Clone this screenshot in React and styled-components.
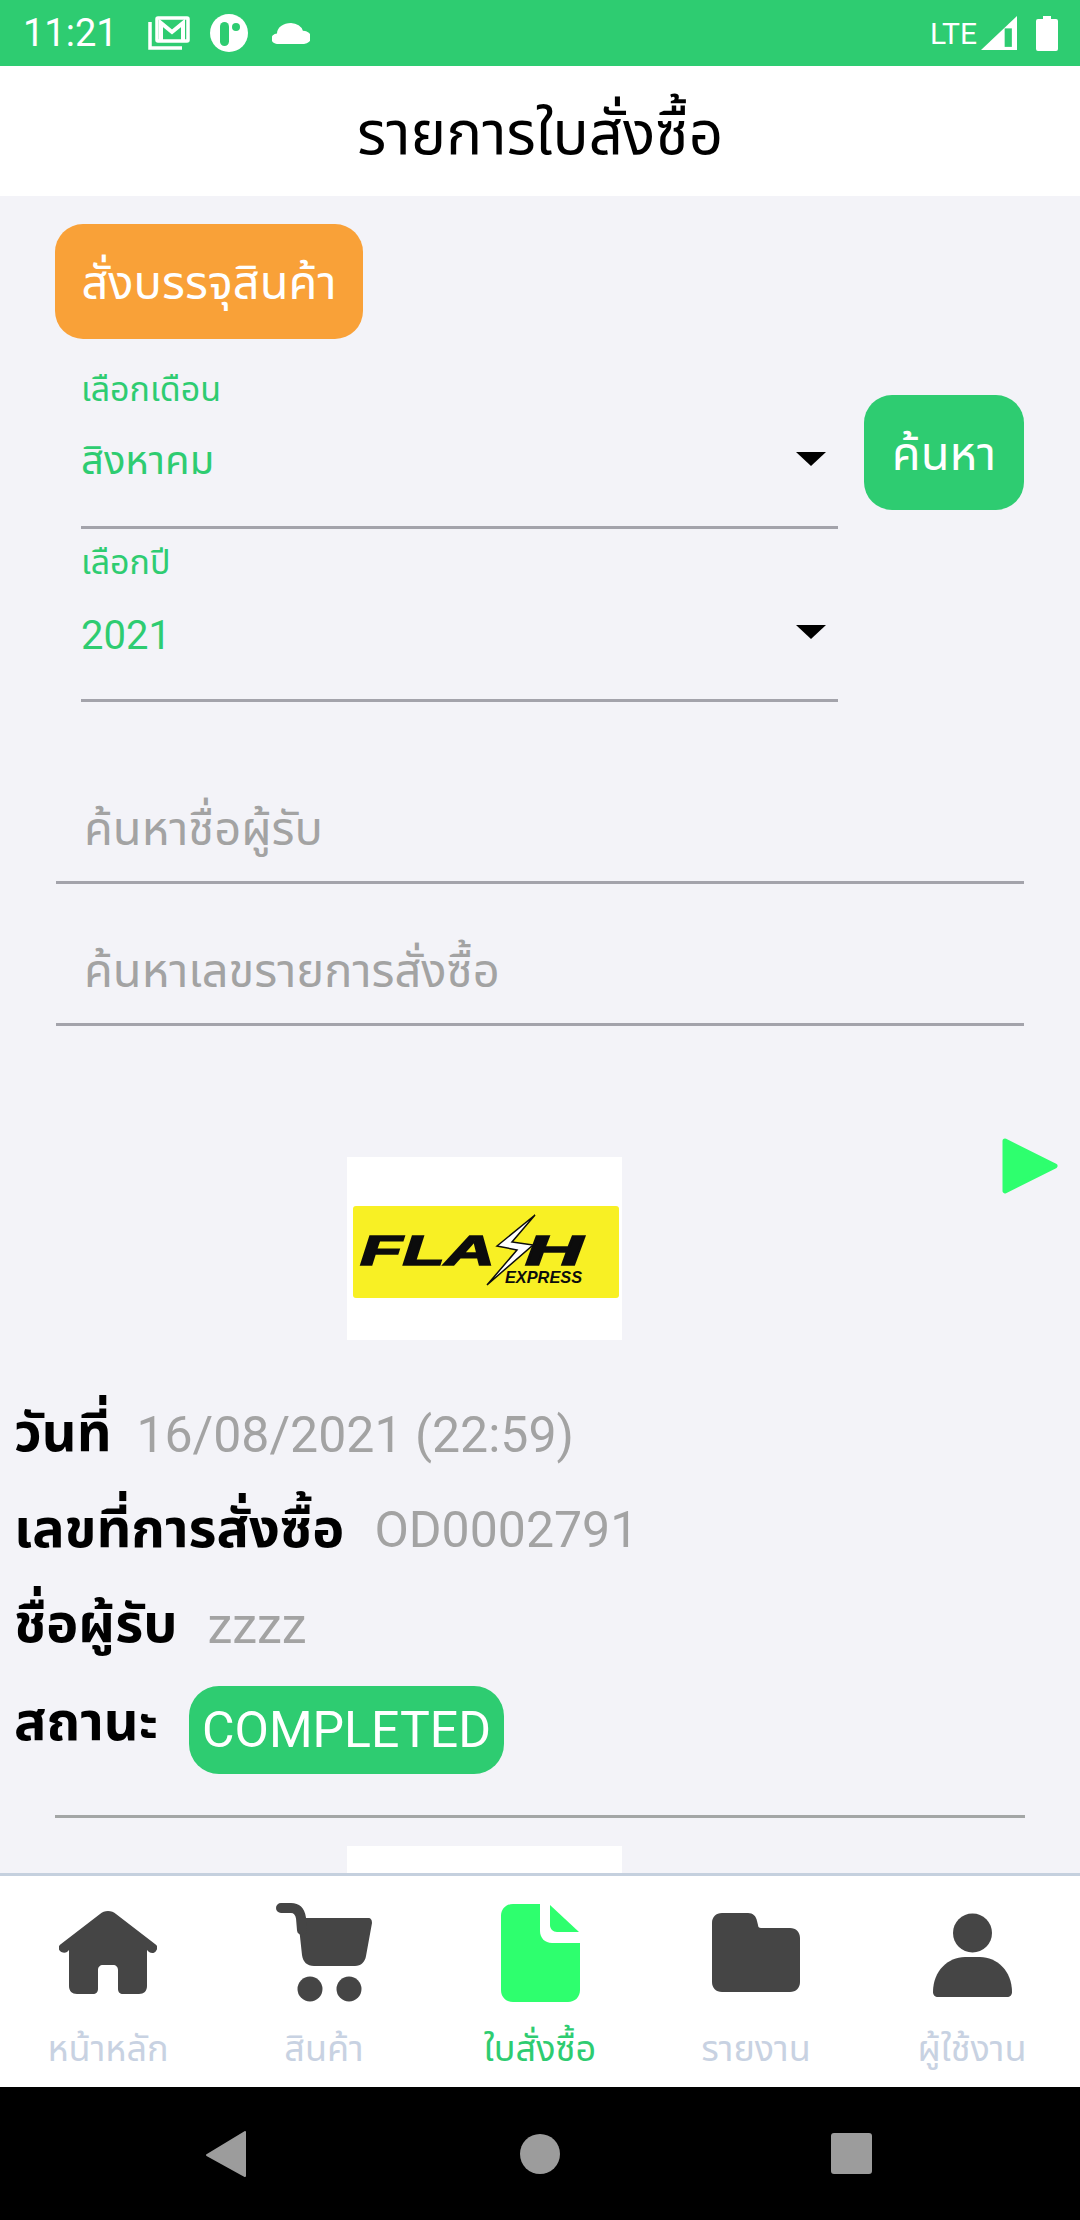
import styled, { createGlobalStyle } from 'styled-components';

const GREEN = '#2ecc71';
const BG = '#f3f3f8';
const FONT = `Roboto, "Noto Sans", "Noto Sans Thai", sans-serif`;

const Global = createGlobalStyle`
  html, body { margin: 0; padding: 0; background: ${BG}; }
  * { box-sizing: border-box; }
  body { font-family: ${FONT}; }
`;

const Page = styled.div`
  width: 1080px;
  height: 2220px;
  display: flex;
  flex-direction: column;
  overflow: hidden;
`;

const StatusBar = styled.div`
  height: 66px;
  flex: none;
  background: ${GREEN};
  color: #fff;
  display: flex;
  align-items: center;
  padding: 0 22px 0 23px;
`;
const Clock = styled.span`
  font-size: 38px;
  width: 125px;
`;
const StatusIcons = styled.div`
  display: flex;
  align-items: center;
  gap: 20px;
`;
const StatusRight = styled.div`
  margin-left: auto;
  display: flex;
  align-items: center;
`;
const Lte = styled.span`
  font-size: 30px;
  margin-right: 4px;
`;

const Header = styled.header`
  height: 130px;
  flex: none;
  background: #fff;
  display: flex;
  align-items: center;
  justify-content: center;
  padding-top: 8px;
  font-size: 60px;
  color: #000;
`;

const Main = styled.main`
  flex: 1;
  min-height: 0;
  overflow: hidden;
  background: ${BG};
  padding-top: 28px;
`;

const OrderButton = styled.div`
  margin-left: 55px;
  width: 308px;
  height: 115px;
  padding-top: 5px;
  border-radius: 28px;
  background: #f9a138;
  color: #fff;
  font-size: 47px;
  display: flex;
  align-items: center;
  justify-content: center;
`;

const FilterRow = styled.div`
  display: flex;
  margin: 17px 0 0 81px;
  gap: 26px;
`;
const FilterFields = styled.div`
  width: 757px;
`;
const Field = styled.div`
  height: 173px;
  padding-top: 8px;
  border-bottom: 3px solid #a3a3ab;
`;
const FieldLabel = styled.div`
  font-size: 34px;
  color: ${GREEN};
  height: 50px;
  line-height: 50px;
`;
const FieldValue = styled.div`
  display: flex;
  align-items: center;
  justify-content: space-between;
  height: 72px;
  margin-top: 12px;
  font-size: 40px;
  color: ${GREEN};
  padding-right: 12px;
`;
const Caret = styled.span`
  width: 0;
  height: 0;
  margin-bottom: 6px;
  border-left: 15px solid transparent;
  border-right: 15px solid transparent;
  border-top: 14px solid #000;
`;
const SearchButton = styled.div`
  width: 160px;
  height: 115px;
  margin-top: 39px;
  padding-top: 5px;
  border-radius: 28px;
  background: ${GREEN};
  color: #fff;
  font-size: 47px;
  display: flex;
  align-items: center;
  justify-content: center;
`;

const SearchInputs = styled.div`
  margin: 40px 56px 0;
  display: flex;
  flex-direction: column;
`;
const SearchInput = styled.div`
  height: 142px;
  display: flex;
  align-items: flex-end;
  padding: 0 0 15px 28px;
  border-bottom: 3px solid #a3a3ab;
  font-size: 47px;
  color: #a3a3a3;
`;

const Order = styled.section`
  padding-top: 131px;
`;
const OrderTop = styled.div`
  display: flex;
  align-items: flex-start;
  padding: 0 22px 0 347px;
  justify-content: space-between;
`;
const Logo = styled.svg`
  display: block;
  flex: none;
`;
const PlayMark = styled.svg`
  display: block;
  margin-top: -19px;
`;
const Details = styled.div`
  margin-top: 47px;
  padding-left: 14px;
`;
const DetailRow = styled.div`
  display: flex;
  align-items: center;
  height: 95.5px;
  gap: ${p => p.$gap || 30}px;
`;
const DetailLabel = styled.span`
  font-size: 54px;
  font-weight: 700;
  color: #000;
`;
const DetailValue = styled.span`
  font-size: 50px;
  color: #a3a3a3;
`;
const StatusRow = styled(DetailRow)`
  height: 88px;
  margin-top: 12px;
  ${DetailLabel} { margin-bottom: 12px; }
`;
const StatusPill = styled.span`
  height: 88px;
  padding: 0 13px;
  margin-left: 1px;
  border-radius: 30px;
  background: ${GREEN};
  color: #fff;
  font-size: 50px;
  display: flex;
  align-items: center;
`;
const Divider = styled.hr`
  margin: 41px 55px 0;
  border: 0;
  height: 3px;
  background: #a3a6a6;
`;
const NextLogo = styled.div`
  margin: 28px 0 0 347px;
  width: 275px;
  height: 100px;
  background: #fff;
`;

const TabBar = styled.nav`
  height: 214px;
  flex: none;
  background: #fff;
  border-top: 3px solid #c5d0de;
  display: grid;
  grid-template-columns: repeat(5, 1fr);
`;
const Tab = styled.div`
  display: flex;
  flex-direction: column;
  align-items: center;
  padding-top: 27px;
  color: ${p => (p.$active ? GREEN : '#c8d2e2')};
  font-size: 36px;
`;
const TabIcon = styled.svg`
  display: block;
  fill: ${p => (p.$active ? '#2eff6e' : '#454545')};
`;
const IconSlot = styled.div`
  height: 99px;
  display: flex;
  align-items: center;
`;
const TabLabel = styled.span`
  margin-top: 17px;
  line-height: 60px;
`;

const NavBar = styled.div`
  height: 133px;
  flex: none;
  background: #000;
  display: grid;
  grid-template-columns: repeat(3, 80px);
  justify-content: center;
  gap: 234px;
  align-items: center;
  color: #9c9c9c;
`;
const NavCell = styled.div`
  display: flex;
  justify-content: center;
`;
const NavSquare = styled.svg`
  margin-right: 6px;
`;

const MailIcon = () => (
  <svg width="42" height="34" viewBox="0 0 42 34" fill="none" stroke="#fff" strokeWidth="3.5">
    <path d="M2 6v26h32" />
    <rect x="9" y="2" width="31" height="23" rx="1" />
    <path d="M13 24V7l11 9 11-9v17" strokeWidth="4" />
  </svg>
);
const RoundAppIcon = () => (
  <svg width="38" height="38" viewBox="0 0 38 38">
    <circle cx="19" cy="19" r="19" fill="#fff" />
    <rect x="10" y="8" width="9" height="24" rx="4.5" fill={GREEN} />
    <circle cx="26" cy="13" r="4" fill={GREEN} />
  </svg>
);
const CloudIcon = () => (
  <svg width="38" height="21" viewBox="0 0 38 24" fill="#fff" style={{ marginLeft: 4 }} preserveAspectRatio="none">
    <path d="M6 24a6 6 0 0 1-1-12A14 12 0 0 1 19 0a13 12 0 0 1 12 9 7.500 7.500 0 0 1 1 15z" />
  </svg>
);
const SignalIcon = () => (
  <svg width="36" height="34" viewBox="0 0 35 33">
    <path d="M35 0v33H0z" fill="#fff" />
    <path d="M23 12h7v18h-7z" fill={GREEN} />
  </svg>
);
const BatteryIcon = () => (
  <svg width="22" height="35" viewBox="0 0 22 35" fill="#fff" style={{ marginLeft: 19 }}>
    <path d="M7 0h8v3h5a2 2 0 0 1 2 2v28a2 2 0 0 1-2 2H2a2 2 0 0 1-2-2V5a2 2 0 0 1 2-2h5z" />
  </svg>
);

const HomeGlyph = ({ $active }) => (
  <TabIcon $active={$active} width="98" height="83" viewBox="0 0 98 83">
    <path d="M49 0c-3 0-6 1-8 3L2 33c-3 2-3 5-1 7s5 2 7 1l2-2v36c0 5 3 8 8 8h16c3 0 5-2 5-5V59c0-3 2-5 5-5h10c3 0 5 2 5 5v19c0 3 2 5 5 5h16c5 0 8-3 8-8V39l2 2c2 1 5 2 7-1s2-5-1-7L57 3c-2-2-5-3-8-3z" />
  </TabIcon>
);
const CartGlyph = ({ $active }) => (
  <TabIcon $active={$active} width="96" height="99" viewBox="0 0 96 99">
    <path d="M22 15h70c3 0 4 2 4 5l-6 33c-1 6-5 10-11 10H38c-7 0-11-4-12-11z" />
    <path d="M5 5h10c6 0 9 4 10 10l1 12" fill="none" stroke="#454545" strokeWidth="10" strokeLinecap="round" />
    <circle cx="34" cy="86" r="12.500" />
    <circle cx="73" cy="86" r="12.500" />
  </TabIcon>
);
const DocGlyph = ({ $active }) => (
  <TabIcon $active={$active} width="79" height="98" viewBox="0 0 79 98">
    <path d="M12 0h27v27c0 7 5 12 12 12h28v47c0 7-5 12-12 12H12C5 98 0 93 0 86V12C0 5 5 0 12 0z" />
    <path d="M49 1l29 27H56c-4 0-7-3-7-7z" />
  </TabIcon>
);
const FolderGlyph = ({ $active }) => (
  <TabIcon $active={$active} width="88" height="79" viewBox="0 0 88 79">
    <path d="M10 0h26c5 0 8 3 9 8l1 4c0 2 1 3 3 3h29c6 0 10 4 10 10v44c0 6-4 10-10 10H10C4 79 0 75 0 69V10C0 4 4 0 10 0z" />
  </TabIcon>
);
const PersonGlyph = ({ $active }) => (
  <TabIcon $active={$active} width="79" height="88" viewBox="0 -4 79 88">
    <circle cx="39.500" cy="20" r="19.500" />
    <path d="M0 79c0-21 15-35 32-35h15c17 0 32 14 32 35 0 3-2 5-5 5H5c-3 0-5-2-5-5z" />
  </TabIcon>
);

const FlashLogo = () => (
  <Logo width="275" height="183" viewBox="0 0 275 183">
    <rect width="275" height="183" fill="#fff" />
    <rect x="6" y="49" width="266" height="92" rx="3" fill="#f8f024" />
    <g fontFamily="Liberation Sans, sans-serif" fontWeight="700" fontStyle="italic" fill="#0c0c0c">
      <text x="13" y="108" fontSize="42" textLength="135" lengthAdjust="spacingAndGlyphs" stroke="#0c0c0c" strokeWidth="1.5">FLA</text>
      <text x="178" y="108" fontSize="42" textLength="58" lengthAdjust="spacingAndGlyphs" stroke="#0c0c0c" strokeWidth="1.5">H</text>
      <text x="158" y="126" fontSize="17" textLength="77" lengthAdjust="spacingAndGlyphs">EXPRESS</text>
    </g>
    <path d="M188 58 150 89l20 4-30 35 46-40-21-3z" fill="#fff" stroke="#0c0c0c" strokeWidth="1.5" />
  </Logo>
);

const tabs = [
  { label: 'หน้าหลัก', Icon: HomeGlyph },
  { label: 'สินค้า', Icon: CartGlyph },
  { label: 'ใบสั่งซื้อ', Icon: DocGlyph, active: true },
  { label: 'รายงาน', Icon: FolderGlyph },
  { label: 'ผู้ใช้งาน', Icon: PersonGlyph },
];

const App = () => (
  <Page>
    <Global />
    <StatusBar>
      <Clock>11:21</Clock>
      <StatusIcons>
        <MailIcon />
        <RoundAppIcon />
        <CloudIcon />
      </StatusIcons>
      <StatusRight>
        <Lte>LTE</Lte>
        <SignalIcon />
        <BatteryIcon />
      </StatusRight>
    </StatusBar>
    <Header>รายการใบสั่งซื้อ</Header>
    <Main>
      <OrderButton>สั่งบรรจุสินค้า</OrderButton>
      <FilterRow>
        <FilterFields>
          <Field>
            <FieldLabel>เลือกเดือน</FieldLabel>
            <FieldValue>สิงหาคม<Caret /></FieldValue>
          </Field>
          <Field>
            <FieldLabel>เลือกปี</FieldLabel>
            <FieldValue>2021<Caret /></FieldValue>
          </Field>
        </FilterFields>
        <SearchButton>ค้นหา</SearchButton>
      </FilterRow>
      <SearchInputs>
        <SearchInput>ค้นหาชื่อผู้รับ</SearchInput>
        <SearchInput>ค้นหาเลขรายการสั่งซื้อ</SearchInput>
      </SearchInputs>
      <Order>
        <OrderTop>
          <FlashLogo />
          <PlayMark width="56" height="56" viewBox="0 0 56 56">
            <path d="M3 3 53 28 3 53z" fill="#2eff6e" stroke="#2eff6e" strokeWidth="5" strokeLinejoin="round" />
          </PlayMark>
        </OrderTop>
        <Details>
          <DetailRow $gap={25}><DetailLabel>วันที่</DetailLabel><DetailValue>16/08/2021 (22:59)</DetailValue></DetailRow>
          <DetailRow><DetailLabel>เลขที่การสั่งซื้อ</DetailLabel><DetailValue>OD0002791</DetailValue></DetailRow>
          <DetailRow><DetailLabel>ชื่อผู้รับ</DetailLabel><DetailValue>zzzz</DetailValue></DetailRow>
          <StatusRow><DetailLabel>สถานะ</DetailLabel><StatusPill>COMPLETED</StatusPill></StatusRow>
        </Details>
        <Divider />
        <NextLogo />
      </Order>
    </Main>
    <TabBar>
      {tabs.map(({ label, Icon, active }) => (
        <Tab key={label} $active={active}>
          <IconSlot><Icon $active={active} /></IconSlot>
          <TabLabel>{label}</TabLabel>
        </Tab>
      ))}
    </TabBar>
    <NavBar>
      <NavCell>
        <svg width="40" height="46" viewBox="0 0 40 46" fill="currentColor"><path d="M39 1v44L1 24z" stroke="currentColor" strokeWidth="2" strokeLinejoin="round" /></svg>
      </NavCell>
      <NavCell>
        <svg width="40" height="40" viewBox="0 0 40 40" fill="currentColor"><circle cx="20" cy="20" r="20" /></svg>
      </NavCell>
      <NavCell>
        <NavSquare width="41" height="41" viewBox="0 0 41 41" fill="currentColor"><rect width="41" height="41" rx="3" /></NavSquare>
      </NavCell>
    </NavBar>
  </Page>
);

export default App;
